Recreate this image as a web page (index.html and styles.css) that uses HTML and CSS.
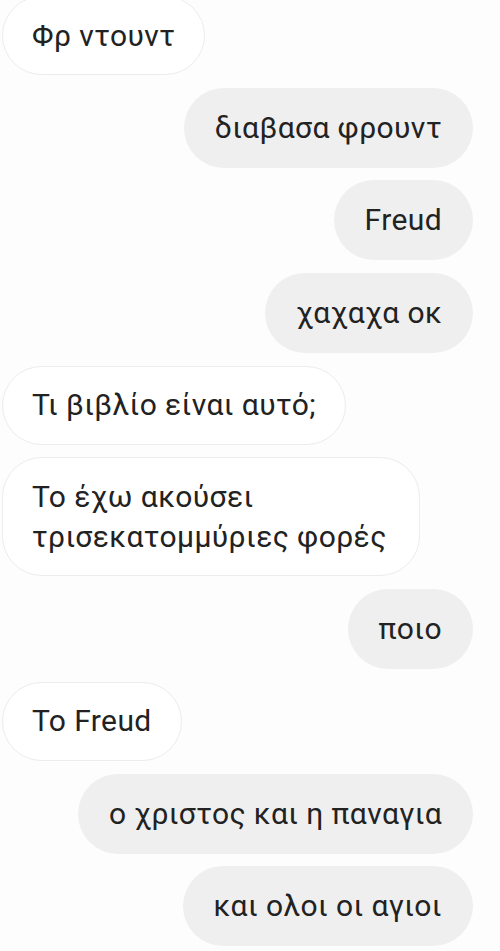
FILE: index.html
```html
<!DOCTYPE html>
<html lang="el">
<head>
    <meta charset="UTF-8">
    <meta name="viewport" content="width=device-width, initial-scale=1.0">
    <title>Συνομιλία</title>
    <link rel="stylesheet" href="styles.css">
</head>
<body>
    <div class="chat">
        <div class="msg in">Φρ ντουντ</div>
        <div class="msg out">διαβασα φρουντ</div>
        <div class="msg out">Freud</div>
        <div class="msg out">χαχαχα οκ</div>
        <div class="msg in">Τι βιβλίο είναι αυτό;</div>
        <div class="msg in">Το έχω ακούσει τρισεκατομμύριες φορές</div>
        <div class="msg out">ποιο</div>
        <div class="msg in">Το Freud</div>
        <div class="msg out">ο χριστος και η παναγια</div>
        <div class="msg out">και ολοι οι αγιοι</div>
    </div>
</body>
</html>
```

FILE: styles.css
```css
body {
    margin: 0;
    background: #fdfdfd;
    font-family: Roboto, "Noto Sans", sans-serif;
    color: #222222;
}
.chat {
    display: flex;
    flex-direction: column;
    gap: 12.7px;
    padding: 0 27px 0 2px;
    margin-top: -4px;
}
.msg {
    box-sizing: border-box;
    max-width: 418px;
    padding: 20px 31px;
    border-radius: 40px;
    font-size: 30px;
    line-height: 40px;
    letter-spacing: 0.4px;
}
.in {
    align-self: flex-start;
    background: #ffffff;
    border: 1.5px solid #ececec;
    padding: 18.5px 29px;
}
.out {
    align-self: flex-end;
    background: #efefef;
}
```
